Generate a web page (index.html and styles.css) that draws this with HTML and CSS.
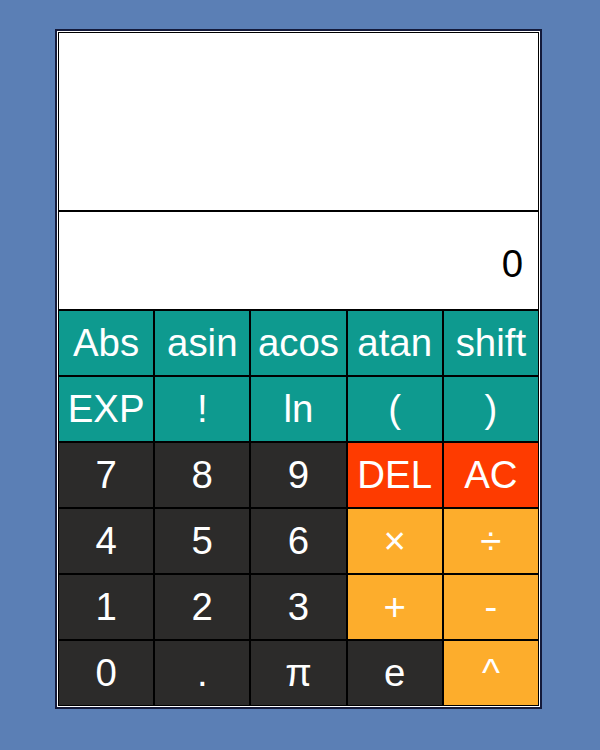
FILE: index.html
```html
<!DOCTYPE html>
<html>
<head>
<meta charset="utf-8">
<link rel="stylesheet" href="styles.css">
</head>
<body>
<div class="calc">
  <div class="display history"></div>
  <div class="display result"><span>0</span></div>
  <div class="keys">
    <button class="key fn">Abs</button>
    <button class="key fn">asin</button>
    <button class="key fn">acos</button>
    <button class="key fn">atan</button>
    <button class="key fn">shift</button>
    <button class="key fn">EXP</button>
    <button class="key fn">!</button>
    <button class="key fn">ln</button>
    <button class="key fn">(</button>
    <button class="key fn">)</button>
    <button class="key num">7</button>
    <button class="key num">8</button>
    <button class="key num">9</button>
    <button class="key clear">DEL</button>
    <button class="key clear">AC</button>
    <button class="key num">4</button>
    <button class="key num">5</button>
    <button class="key num">6</button>
    <button class="key op">×</button>
    <button class="key op">÷</button>
    <button class="key num">1</button>
    <button class="key num">2</button>
    <button class="key num">3</button>
    <button class="key op">+</button>
    <button class="key op">-</button>
    <button class="key num">0</button>
    <button class="key num">.</button>
    <button class="key num">π</button>
    <button class="key num">e</button>
    <button class="key op">^</button>
  </div>
</div>
</body>
</html>
```
FILE: styles.css
```css
html, body {
  margin: 0;
  padding: 0;
}
body {
  background: #5b7fb5;
  font-family: "Liberation Sans", Arial, sans-serif;
  height: 750px;
}
.calc {
  margin: 29px 0 0 55px;
  width: 481px;
  border: 2px solid #141a3a;
  padding: 1px;
  background: #ffffff;
}
.display {
  border: 1px solid #000;
  background: #fff;
  box-sizing: border-box;
}
.history {
  height: 179px;
}
.result {
  height: 99px;
  padding: 30px 15px 0 0;
  text-align: right;
  font-size: 38.4px;
  line-height: 44px;
  color: #000;
}
.keys {
  display: grid;
  grid-template-columns: repeat(5, 1fr);
  grid-auto-rows: 66px;
}
.key {
  margin: 0;
  border: 1px solid #000;
  font-family: "Liberation Sans", Arial, sans-serif;
  font-size: 38.4px;
  color: #fff;
  padding: 0;
  display: flex;
  align-items: center;
  justify-content: center;
  min-width: 0;
}
.fn { background: #0e9a8f; }
.num { background: #2c2b2a; }
.clear { background: #fe3b00; }
.op { background: #fdad2c; }
```
